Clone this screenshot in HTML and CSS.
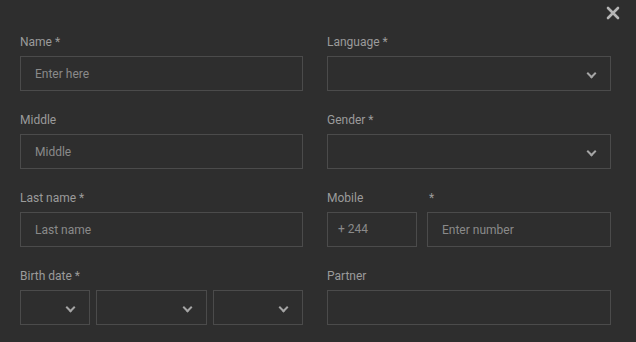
FILE: index.html
```html
<!DOCTYPE html>
<html lang="en">
  <head>
    <meta charset="UTF-8" />
    <meta name="viewport" content="width=device-width, initial-scale=1.0" />
    <title>Profile Form</title>

    <link rel="stylesheet" href="styles.css">
  </head>
  <body>
    <div class="modal">
      <button class="close" aria-label="Close">
        <svg width="14" height="14" viewBox="0 0 14 14">
          <path d="M2 2 L12 12 M12 2 L2 12" stroke="#b5b5b5" stroke-width="2.6" stroke-linecap="round" />
        </svg>
      </button>

      <form class="form">
        <div class="field">
          <label>Name *</label>
          <input type="text" placeholder="Enter here">
        </div>
        <div class="field">
          <label>Language *</label>
          <div class="select"></div>
        </div>

        <div class="field">
          <label>Middle</label>
          <input type="text" placeholder="Middle">
        </div>
        <div class="field">
          <label>Gender *</label>
          <div class="select"></div>
        </div>

        <div class="field">
          <label>Last name *</label>
          <input type="text" placeholder="Last name">
        </div>
        <div class="field">
          <div class="mobile">
            <label>Mobile</label>
            <label>*</label>
            <div class="prefix">+ 244</div>
            <input type="text" placeholder="Enter number">
          </div>
        </div>

        <div class="field">
          <label>Birth date *</label>
          <div class="birth">
            <div class="select"></div>
            <div class="select"></div>
            <div class="select"></div>
          </div>
        </div>
        <div class="field">
          <label>Partner</label>
          <input type="text">
        </div>
      </form>
    </div>
  </body>
</html>
```

FILE: styles.css
```css
* {
  box-sizing: border-box;
  margin: 0;
  padding: 0;
  font-family: Roboto, "Liberation Sans", Arial, sans-serif;
}

body {
  width: 636px;
  height: 342px;
  background-color: #2e2e2e;
  overflow: hidden;
}

.modal {
  position: relative;
  padding: 35px 25px 0 20px;
}

.close {
  position: absolute;
  top: 6px;
  right: 16px;
  width: 14px;
  height: 14px;
  background: none;
  border: none;
  cursor: pointer;
}

.close svg {
  display: block;
}

.form {
  display: grid;
  grid-template-columns: 283px 284px;
  column-gap: 24px;
}

.field {
  margin-bottom: 22px;
}

label {
  display: block;
  height: 15px;
  line-height: 15px;
  margin-bottom: 6px;
  font-size: 12px;
  color: #9b9b9b;
}

input,
.select,
.prefix {
  display: block;
  width: 100%;
  height: 35px;
  background-color: #2e2e2e;
  border: 1px solid #4b4b4b;
  padding: 0 14px;
  font-size: 12px;
  color: #8a8a8a;
  outline: none;
}

input::placeholder {
  color: #8a8a8a;
}

.prefix {
  line-height: 33px;
  padding: 0 10px;
}

.select {
  position: relative;
}

.select::after {
  content: "";
  position: absolute;
  right: 15px;
  top: 13px;
  width: 5px;
  height: 5px;
  border-right: 2px solid #a5a5a5;
  border-bottom: 2px solid #a5a5a5;
  transform: rotate(45deg);
}

.mobile {
  display: grid;
  grid-template-columns: 90px 1fr;
  column-gap: 10px;
}

.mobile label:nth-child(2) {
  padding-left: 2px;
}

.birth {
  display: grid;
  grid-template-columns: 70px 111px 1fr;
  column-gap: 6px;
}
```
